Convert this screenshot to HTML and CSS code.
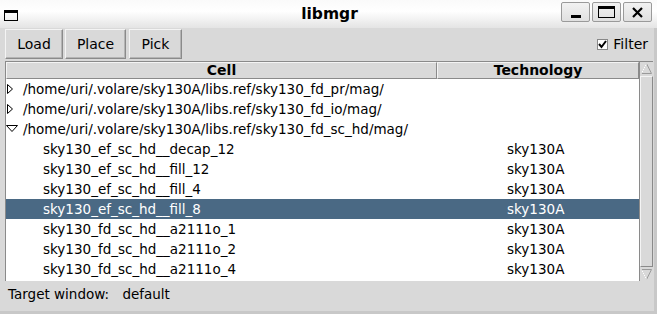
FILE: index.html
```html
<!DOCTYPE html>
<html lang="en">
<head>
    <meta charset="UTF-8">
    <title>libmgr</title>
    <link rel="stylesheet" href="styles.css">
</head>
<body>
    <div class="window">
        <div class="titlebar">
            <div class="win-icon"></div>
            <div class="title">libmgr</div>
            <div class="win-buttons">
                <span class="wbtn"><span class="min-glyph"></span></span>
                <span class="wbtn"><span class="max-glyph"></span></span>
                <span class="wbtn">
                    <svg width="11" height="11" viewBox="0 0 11 11"><path d="M1 1 L10 10 M10 1 L1 10" stroke="#000" stroke-width="2.2"/></svg>
                </span>
            </div>
        </div>

        <div class="content">
            <div class="toolbar">
                <button class="tk-btn load">Load</button>
                <button class="tk-btn place">Place</button>
                <button class="tk-btn pick">Pick</button>
                <label class="filter"><span class="check">
                    <svg width="9" height="9" viewBox="0 0 9 9"><path d="M1 4 L3.5 7 L8 1" fill="none" stroke="#000" stroke-width="2"/></svg>
                </span>Filter</label>
            </div>

            <div class="tree">
                <div class="tree-main">
                    <div class="tree-head">
                        <div class="col-cell">Cell</div>
                        <div class="col-tech">Technology</div>
                    </div>
                    <div class="rows">
                        <div class="row dir">
                            <svg class="tri" width="17" height="20" viewBox="0 0 17 20"><path d="M1.5 5.5 L6.5 10 L1.5 14.5 Z" fill="#fff" stroke="#000"/></svg>/home/uri/.volare/sky130A/libs.ref/sky130_fd_pr/mag/
                        </div>
                        <div class="row dir">
                            <svg class="tri" width="17" height="20" viewBox="0 0 17 20"><path d="M1.5 5.5 L6.5 10 L1.5 14.5 Z" fill="#fff" stroke="#000"/></svg>/home/uri/.volare/sky130A/libs.ref/sky130_fd_io/mag/
                        </div>
                        <div class="row dir">
                            <svg class="tri" width="17" height="20" viewBox="0 0 17 20"><path d="M0.5 6.5 L11.5 6.5 L6 12.5 Z" fill="#fff" stroke="#000"/></svg>/home/uri/.volare/sky130A/libs.ref/sky130_fd_sc_hd/mag/
                        </div>
                        <div class="row leaf"><span class="name">sky130_ef_sc_hd__decap_12</span><span class="tech">sky130A</span></div>
                        <div class="row leaf"><span class="name">sky130_ef_sc_hd__fill_12</span><span class="tech">sky130A</span></div>
                        <div class="row leaf"><span class="name">sky130_ef_sc_hd__fill_4</span><span class="tech">sky130A</span></div>
                        <div class="row leaf selected"><span class="name">sky130_ef_sc_hd__fill_8</span><span class="tech">sky130A</span></div>
                        <div class="row leaf"><span class="name">sky130_fd_sc_hd__a2111o_1</span><span class="tech">sky130A</span></div>
                        <div class="row leaf"><span class="name">sky130_fd_sc_hd__a2111o_2</span><span class="tech">sky130A</span></div>
                        <div class="row leaf"><span class="name">sky130_fd_sc_hd__a2111o_4</span><span class="tech">sky130A</span></div>
                    </div>
                </div>
                <div class="scrollbar">
                    <div class="arrow up"><svg width="13" height="13" viewBox="0 0 13 13"><path d="M6.5 1.5 L11.5 11.5 L1.5 11.5 Z" fill="#d9d9d9" stroke="#9a9a9a"/><path d="M6.5 1.5 L1.5 11.5" stroke="#fff"/></svg></div>
                    <div class="trough"><div class="slider"></div></div>
                    <div class="arrow down"><svg width="13" height="13" viewBox="0 0 13 13"><path d="M1.5 1.5 L11.5 1.5 L6.5 11.5 Z" fill="#d9d9d9" stroke="#9a9a9a"/><path d="M1.5 1.5 L6.5 11.5" stroke="#fff"/></svg></div>
                </div>
            </div>

            <div class="status">
                <span>Target window:</span>
                <span class="target">default</span>
            </div>
        </div>
    </div>
</body>
</html>
```

FILE: styles.css
```css
body {
    margin: 0;
    font-family: 'DejaVu Sans', sans-serif;
    font-size: 13.5px;
    color: #000;
    background: #d9d9d9;
}
.window {
    width: 657px;
    height: 314px;
    overflow: hidden;
    display: flex;
    flex-direction: column;
}
.titlebar {
    height: 28px;
    display: flex;
    align-items: center;
    background: linear-gradient(#fafafa, #ffffff 40%, #e4e4e4);
}
.win-icon {
    width: 12px;
    height: 7px;
    margin-left: 4px;
    margin-top: 3px;
    border: 1.5px solid #000;
    border-top-width: 3px;
}
.title {
    flex: 1;
    text-align: center;
    font-weight: bold;
    font-size: 15.5px;
    padding-left: 80px;
}
.win-buttons {
    display: flex;
    gap: 2px;
    margin-right: 5px;
    margin-top: -4px;
}
.wbtn {
    width: 27px;
    height: 18px;
    border: 1px solid #9a9a9a;
    border-radius: 2px;
    background: linear-gradient(#f2f2f2, #e0e0e0);
    display: flex;
    align-items: center;
    justify-content: center;
}
.min-glyph {
    width: 10px;
    height: 3px;
    background: #000;
    margin-top: 8px;
}
.max-glyph {
    width: 15px;
    height: 8px;
    border: 1px solid #000;
    border-top-width: 3px;
}
.content {
    flex: 1;
    display: flex;
    flex-direction: column;
    border-right: 3px solid #c8c8c8;
    border-bottom: 3px solid #c8c8c8;
}
.toolbar {
    display: flex;
    align-items: center;
    padding: 1px 0 0 5px;
    height: 30px;
}
.tk-btn {
    font-family: 'DejaVu Sans', sans-serif;
    font-size: 14px;
    height: 30px;
    background: #d9d9d9;
    border: 1px solid;
    border-color: #f4f4f4 #8a8a8a #8a8a8a #f4f4f4;
    box-shadow: inset -1px -1px 0 #b4b4b4;
    padding: 0;
    margin-right: 2px;
}
.load { width: 58px; }
.place { width: 61px; }
.pick { width: 53px; margin-left: 1px; }
.filter {
    margin-left: auto;
    margin-right: 6px;
    display: flex;
    align-items: center;
    font-size: 14px;
}
.check {
    width: 9px;
    height: 9px;
    background: #fff;
    border: 1px solid #888;
    margin-right: 5px;
    display: flex;
}
.tree {
    display: flex;
    margin: 2px 1px 0 5px;
    height: 219px;
    border-top: 1px solid #8a8a8a;
    border-left: 1px solid #8a8a8a;
}
.tree-main {
    flex: 1;
    background: #fff;
    display: flex;
    flex-direction: column;
}
.tree-head {
    display: flex;
    height: 17px;
    font-weight: bold;
    font-size: 14px;
    background: #d9d9d9;
}
.tree-head div {
    text-align: center;
    line-height: 15px;
    border: 1px solid;
    border-color: #f4f4f4 #8a8a8a #8a8a8a #f4f4f4;
}
.col-cell { width: 429px; }
.col-tech { flex: 1; }
.row {
    height: 20px;
    line-height: 20px;
    display: flex;
    white-space: nowrap;
}
.tri {
    flex: none;
}
.leaf .name {
    width: 464px;
    padding-left: 37px;
}
.selected {
    background: #4a6984;
    color: #fff;
}
.scrollbar {
    width: 13px;
    background: #d9d9d9;
    border-left: 1px solid #8a8a8a;
    display: flex;
    flex-direction: column;
}
.arrow { height: 13px; }
.trough {
    flex: 1;
    display: flex;
    padding: 1px 0;
}
.slider {
    flex: 1;
    border: 1px solid;
    border-color: #f4f4f4 #8a8a8a #8a8a8a #f4f4f4;
}
.status {
    padding: 5px 0 0 8px;
    font-size: 13.5px;
}
.target { margin-left: 9px; }
```
